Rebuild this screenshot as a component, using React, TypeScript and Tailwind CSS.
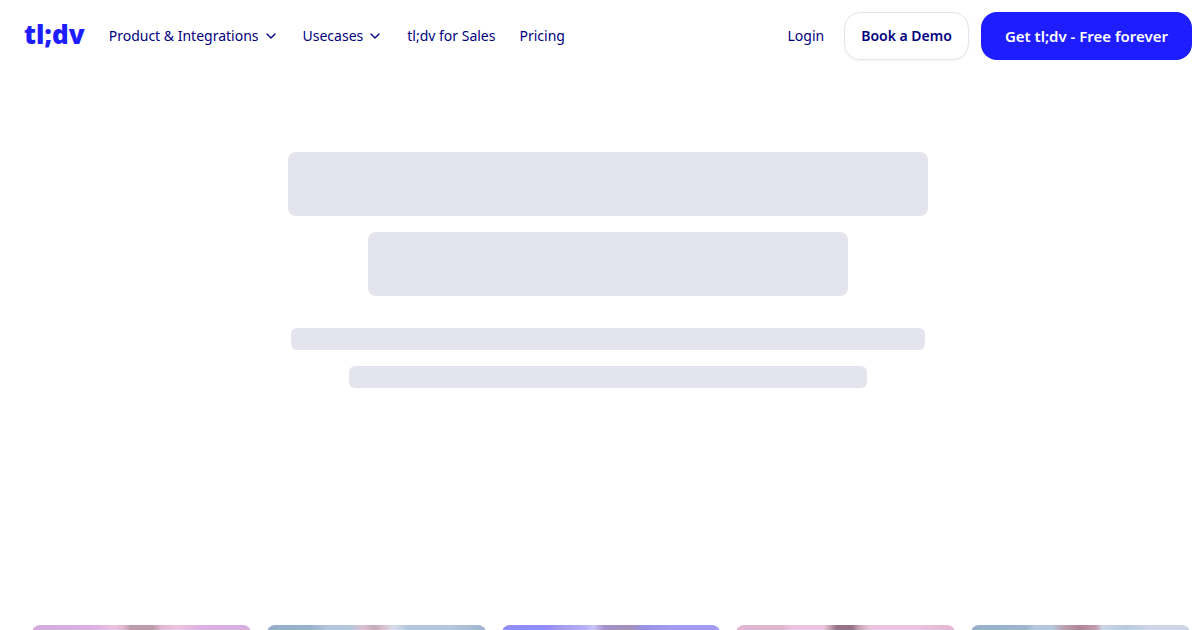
import { ChevronDown } from "lucide-react";

const people = [
  "bg-[linear-gradient(90deg,#d5abdf_0%,#dcb0e2_28%,#ecc4df_38%,#e0b4d0_42%,#bd9dac_45%,#bb9baa_55%,#e2b6d2_59%,#ecc4df_66%,#dcb0e2_78%,#d9aee1_100%)]",
  "bg-[linear-gradient(90deg,#96afca_0%,#9ab2cc_20%,#b5c7dc_28%,#b5c7dc_38%,#dcc0d3_44%,#c3a9b9_49%,#dcc3d6_54%,#d8deeb_58%,#b5c7dc_64%,#b5c7dc_84%,#9eb4ce_100%)]",
  "bg-[linear-gradient(90deg,#908cfa_0%,#918dfa_20%,#a79cee_28%,#b8affa_38%,#cbc5f8_42%,#a590cb_47%,#a493b9_58%,#9892e4_65%,#a39bf1_78%,#a39bf1_100%)]",
  "bg-[linear-gradient(90deg,#e2b6d2_0%,#dfb5d0_21%,#ecc4df_25%,#ecc4df_40%,#c5a1b3_43%,#98718a_46%,#98718a_53%,#c3a1b4_56%,#ecc4df_61%,#ecc4df_82%,#e2b6d2_100%)]",
  "bg-[linear-gradient(90deg,#96afca_0%,#9fb5ce_25%,#b5c7dc_29%,#b5c7dc_37%,#bd9dad_43%,#af8494_50%,#c39dac_57%,#ccd6e7_60%,#b8c9df_71%,#ccd6e7_81%,#ccd6e7_100%)]",
];

function MenuButton({ label }: { label: string }) {
  return (
    <button type="button" className="flex items-center gap-1">
      {label}
      <ChevronDown className="size-4" strokeWidth={2} aria-hidden="true" />
    </button>
  );
}

export default function App() {
  return (
    <div className="flex h-screen flex-col overflow-hidden bg-white font-['Noto_Sans',sans-serif] text-[#000080]">
      <header className="flex h-[72px] shrink-0 items-center justify-between pr-2 pl-6">
        <div className="flex items-center gap-6">
          <a
            href="/"
            aria-label="tl;dv home"
            className="pb-1 text-[26px] leading-8 font-black text-[#1d1dff]"
          >
            tl;dv
          </a>
          <nav aria-label="Main" className="flex items-center gap-6 text-sm whitespace-nowrap">
            <MenuButton label="Product &amp; Integrations" />
            <MenuButton label="Usecases" />
            <a href="/sales">tl;dv for Sales</a>
            <a href="/pricing">Pricing</a>
          </nav>
        </div>
        <div className="flex items-center gap-3 whitespace-nowrap">
          <a href="/login" className="mr-2 text-sm">
            Login
          </a>
          <a
            href="/demo"
            className="flex h-12 items-center rounded-2xl border border-[#e4e4ee] px-4 text-sm font-semibold shadow-xs"
          >
            Book a Demo
          </a>
          <a
            href="/signup"
            className="flex h-12 items-center rounded-2xl bg-[#1d1dff] px-6 text-[15px] font-semibold text-white"
          >
            Get tl;dv - Free forever
          </a>
        </div>
      </header>

      <main>
        <section aria-busy="true" className="flex h-[553px] flex-col items-center pt-20 pl-4">
          <div className="h-16 w-full max-w-[640px] rounded-lg bg-[#e4e4ee]" />
          <div className="mt-4 h-16 w-full max-w-[480px] rounded-lg bg-[#e4e4ee]" />
          <div className="mt-8 h-[22px] w-full max-w-[634px] rounded-md bg-[#e4e4ee]" />
          <div className="mt-4 h-[22px] w-full max-w-[518px] rounded-md bg-[#e4e4ee]" />
        </section>
        <section className="grid grid-cols-5 gap-4 pr-2.5 pl-8">
          {people.map((gradient) => (
            <div key={gradient} className={`h-72 rounded-lg ${gradient}`} />
          ))}
        </section>
      </main>
    </div>
  );
}
